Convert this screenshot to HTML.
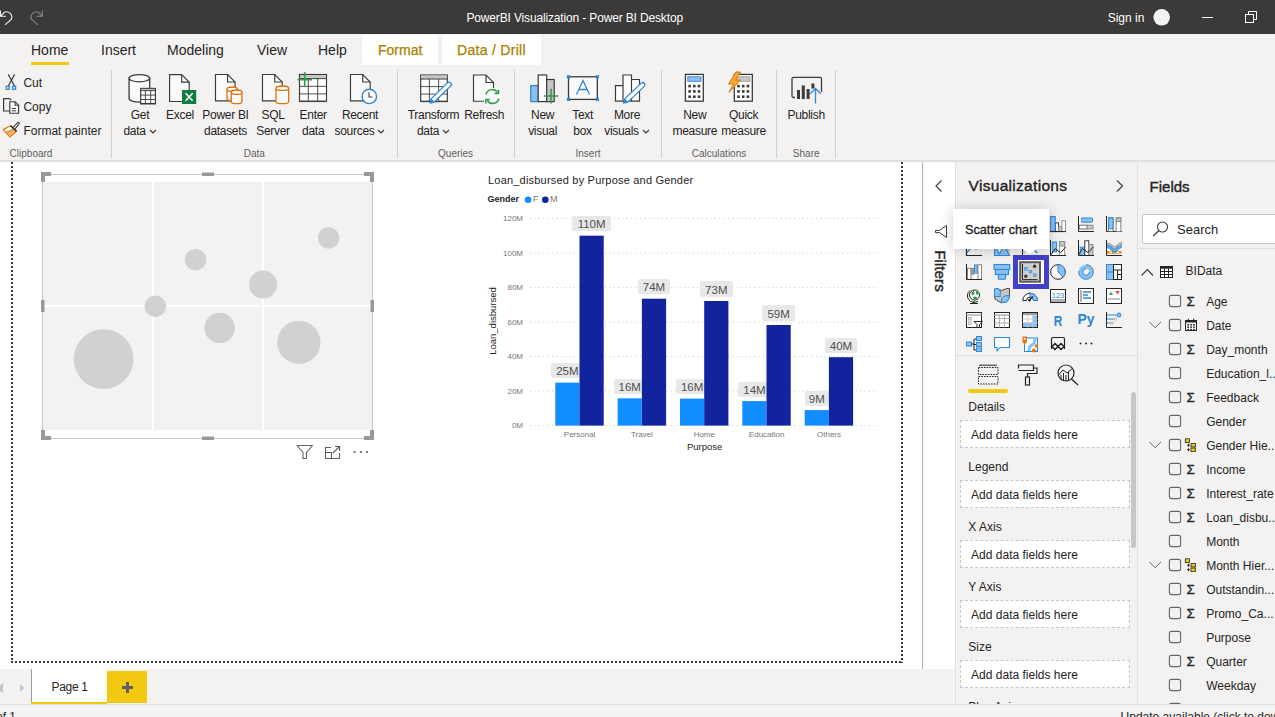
<!DOCTYPE html>
<html><head><meta charset="utf-8">
<style>
*{box-sizing:border-box;margin:0;padding:0}
html,body{width:1275px;height:717px;overflow:hidden;background:#f3f2f1;font-family:"Liberation Sans",sans-serif;color:#252423;position:relative}
.a{position:absolute}
.t{position:absolute;white-space:pre}
svg{overflow:visible}
</style></head><body>
<div class="a" style="left:0px;top:0px;width:1275px;height:34px;background:#3b3a39;"></div>
<div class="t" style="left:466.4px;top:11.84px;font-size:12px;line-height:12px;color:#ffffff;font-weight:400;letter-spacing:-0.15px;">PowerBI Visualization - Power BI Desktop</div>
<svg class="a" style="left:0px;top:0px;" width="50" height="34" viewBox="0 0 50 34"><path d="M0.8 16 L4 12.6 A5.2 5.2 0 0 1 11.2 19.5 L5 24.8" fill="none" stroke="#f3f2f1" stroke-width="1.1"/><path d="M0.5 10.5 V16.3 H6" fill="none" stroke="#f3f2f1" stroke-width="1.1"/><path d="M42 16 L38.8 12.6 A5.2 5.2 0 0 0 31.6 19.5 L37.8 24.8" fill="none" stroke="#8a8886" stroke-width="1.1"/><path d="M42.3 10.5 V16.3 H36.5" fill="none" stroke="#8a8886" stroke-width="1.1"/></svg>
<div class="t" style="left:1107.7px;top:11.54px;font-size:12px;line-height:12px;color:#ffffff;font-weight:400;">Sign in</div>
<svg class="a" style="left:1153px;top:9px;" width="18" height="18" viewBox="0 0 18 18"><circle cx="8.7" cy="8.3" r="8.3" fill="#f3f2f1"/></svg>
<div class="a" style="left:1202px;top:17px;width:11px;height:1px;background:#ffffff;"></div>
<svg class="a" style="left:1245px;top:11px;" width="13" height="12" viewBox="0 0 13 12"><rect x="0.5" y="3.5" width="8" height="8" fill="none" stroke="#fff"/><path d="M3.5 3.5 V0.5 H11.5 V8.5 H8.5" fill="none" stroke="#fff"/></svg>
<div class="a" style="left:362px;top:35px;width:76px;height:30px;background:#ffffff;"></div>
<div class="a" style="left:442px;top:35px;width:99px;height:30px;background:#ffffff;"></div>
<div class="t" style="left:31px;top:43.15px;font-size:14px;line-height:14px;color:#252423;font-weight:400;">Home</div>
<div class="t" style="left:101px;top:43.15px;font-size:14px;line-height:14px;color:#252423;font-weight:400;">Insert</div>
<div class="t" style="left:167px;top:43.15px;font-size:14px;line-height:14px;color:#252423;font-weight:400;">Modeling</div>
<div class="t" style="left:257px;top:43.15px;font-size:14px;line-height:14px;color:#252423;font-weight:400;">View</div>
<div class="t" style="left:318px;top:43.15px;font-size:14px;line-height:14px;color:#252423;font-weight:400;">Help</div>
<div class="t" style="left:378px;top:43.15px;font-size:14px;line-height:14px;color:#a88000;font-weight:400;-webkit-text-stroke:0.25px #a88000;">Format</div>
<div class="t" style="left:457px;top:43.15px;font-size:14px;line-height:14px;color:#a88000;font-weight:400;letter-spacing:0.3px;-webkit-text-stroke:0.25px #a88000;">Data / Drill</div>
<div class="a" style="left:31px;top:62px;width:38px;height:3px;background:#f2c811;"></div>
<div class="a" style="left:0px;top:160px;width:1275px;height:2px;background:#e1dfdd;"></div>
<div class="a" style="left:111px;top:70px;width:1px;height:88px;background:#d2d0ce;"></div>
<div class="a" style="left:397px;top:70px;width:1px;height:88px;background:#d2d0ce;"></div>
<div class="a" style="left:514px;top:70px;width:1px;height:88px;background:#d2d0ce;"></div>
<div class="a" style="left:661px;top:70px;width:1px;height:88px;background:#d2d0ce;"></div>
<div class="a" style="left:776px;top:70px;width:1px;height:88px;background:#d2d0ce;"></div>
<div class="a" style="left:835px;top:70px;width:1px;height:88px;background:#d2d0ce;"></div>
<div class="t" style="left:23.4px;top:76.84px;font-size:12px;line-height:12px;color:#252423;font-weight:400;">Cut</div>
<div class="t" style="left:23.4px;top:100.84px;font-size:12px;line-height:12px;color:#252423;font-weight:400;">Copy</div>
<div class="t" style="left:23.4px;top:124.84px;font-size:12px;line-height:12px;color:#252423;font-weight:400;">Format painter</div>
<div class="t" style="left:-10px;width:300px;text-align:center;top:108.84px;font-size:12px;line-height:12px;color:#252423;font-weight:400;letter-spacing:-0.3px;">Get</div>
<div class="t" style="left:-10px;width:300px;text-align:center;top:125.34px;font-size:12px;line-height:12px;color:#252423;font-weight:400;letter-spacing:-0.3px;">data<svg width="8" height="5" style="margin-left:3px;vertical-align:1px" viewBox="0 0 8 5"><path d="M1 1 L4 4 L7 1" fill="none" stroke="#3b3a39" stroke-width="1.2"/></svg></div>
<div class="t" style="left:30px;width:300px;text-align:center;top:108.84px;font-size:12px;line-height:12px;color:#252423;font-weight:400;letter-spacing:-0.3px;">Excel</div>
<div class="t" style="left:75.5px;width:300px;text-align:center;top:108.84px;font-size:12px;line-height:12px;color:#252423;font-weight:400;letter-spacing:-0.3px;">Power BI</div>
<div class="t" style="left:75.5px;width:300px;text-align:center;top:125.34px;font-size:12px;line-height:12px;color:#252423;font-weight:400;letter-spacing:-0.3px;">datasets</div>
<div class="t" style="left:123px;width:300px;text-align:center;top:108.84px;font-size:12px;line-height:12px;color:#252423;font-weight:400;letter-spacing:-0.3px;">SQL</div>
<div class="t" style="left:123px;width:300px;text-align:center;top:125.34px;font-size:12px;line-height:12px;color:#252423;font-weight:400;letter-spacing:-0.3px;">Server</div>
<div class="t" style="left:163.2px;width:300px;text-align:center;top:108.84px;font-size:12px;line-height:12px;color:#252423;font-weight:400;letter-spacing:-0.3px;">Enter</div>
<div class="t" style="left:163.2px;width:300px;text-align:center;top:125.34px;font-size:12px;line-height:12px;color:#252423;font-weight:400;letter-spacing:-0.3px;">data</div>
<div class="t" style="left:210px;width:300px;text-align:center;top:108.84px;font-size:12px;line-height:12px;color:#252423;font-weight:400;letter-spacing:-0.3px;">Recent</div>
<div class="t" style="left:210px;width:300px;text-align:center;top:125.34px;font-size:12px;line-height:12px;color:#252423;font-weight:400;letter-spacing:-0.3px;">sources<svg width="8" height="5" style="margin-left:3px;vertical-align:1px" viewBox="0 0 8 5"><path d="M1 1 L4 4 L7 1" fill="none" stroke="#3b3a39" stroke-width="1.2"/></svg></div>
<div class="t" style="left:283.5px;width:300px;text-align:center;top:108.84px;font-size:12px;line-height:12px;color:#252423;font-weight:400;letter-spacing:-0.3px;">Transform</div>
<div class="t" style="left:283.5px;width:300px;text-align:center;top:125.34px;font-size:12px;line-height:12px;color:#252423;font-weight:400;letter-spacing:-0.3px;">data<svg width="8" height="5" style="margin-left:3px;vertical-align:1px" viewBox="0 0 8 5"><path d="M1 1 L4 4 L7 1" fill="none" stroke="#3b3a39" stroke-width="1.2"/></svg></div>
<div class="t" style="left:334.2px;width:300px;text-align:center;top:108.84px;font-size:12px;line-height:12px;color:#252423;font-weight:400;letter-spacing:-0.3px;">Refresh</div>
<div class="t" style="left:392.6px;width:300px;text-align:center;top:108.84px;font-size:12px;line-height:12px;color:#252423;font-weight:400;letter-spacing:-0.3px;">New</div>
<div class="t" style="left:392.6px;width:300px;text-align:center;top:125.34px;font-size:12px;line-height:12px;color:#252423;font-weight:400;letter-spacing:-0.3px;">visual</div>
<div class="t" style="left:432.6px;width:300px;text-align:center;top:108.84px;font-size:12px;line-height:12px;color:#252423;font-weight:400;letter-spacing:-0.3px;">Text</div>
<div class="t" style="left:432.6px;width:300px;text-align:center;top:125.34px;font-size:12px;line-height:12px;color:#252423;font-weight:400;letter-spacing:-0.3px;">box</div>
<div class="t" style="left:477px;width:300px;text-align:center;top:108.84px;font-size:12px;line-height:12px;color:#252423;font-weight:400;letter-spacing:-0.3px;">More</div>
<div class="t" style="left:477px;width:300px;text-align:center;top:125.34px;font-size:12px;line-height:12px;color:#252423;font-weight:400;letter-spacing:-0.3px;">visuals<svg width="8" height="5" style="margin-left:3px;vertical-align:1px" viewBox="0 0 8 5"><path d="M1 1 L4 4 L7 1" fill="none" stroke="#3b3a39" stroke-width="1.2"/></svg></div>
<div class="t" style="left:544.8px;width:300px;text-align:center;top:108.84px;font-size:12px;line-height:12px;color:#252423;font-weight:400;letter-spacing:-0.3px;">New</div>
<div class="t" style="left:544.8px;width:300px;text-align:center;top:125.34px;font-size:12px;line-height:12px;color:#252423;font-weight:400;letter-spacing:-0.3px;">measure</div>
<div class="t" style="left:593.6px;width:300px;text-align:center;top:108.84px;font-size:12px;line-height:12px;color:#252423;font-weight:400;letter-spacing:-0.3px;">Quick</div>
<div class="t" style="left:593.6px;width:300px;text-align:center;top:125.34px;font-size:12px;line-height:12px;color:#252423;font-weight:400;letter-spacing:-0.3px;">measure</div>
<div class="t" style="left:656.2px;width:300px;text-align:center;top:108.84px;font-size:12px;line-height:12px;color:#252423;font-weight:400;letter-spacing:-0.3px;">Publish</div>
<div class="t" style="left:-119px;width:300px;text-align:center;top:149.23px;font-size:10px;line-height:10px;color:#605e5c;font-weight:400;">Clipboard</div>
<div class="t" style="left:104.30000000000001px;width:300px;text-align:center;top:149.23px;font-size:10px;line-height:10px;color:#605e5c;font-weight:400;">Data</div>
<div class="t" style="left:305.6px;width:300px;text-align:center;top:149.23px;font-size:10px;line-height:10px;color:#605e5c;font-weight:400;">Queries</div>
<div class="t" style="left:438px;width:300px;text-align:center;top:149.23px;font-size:10px;line-height:10px;color:#605e5c;font-weight:400;">Insert</div>
<div class="t" style="left:569px;width:300px;text-align:center;top:149.23px;font-size:10px;line-height:10px;color:#605e5c;font-weight:400;">Calculations</div>
<div class="t" style="left:656.2px;width:300px;text-align:center;top:149.23px;font-size:10px;line-height:10px;color:#605e5c;font-weight:400;">Share</div>
<svg class="a" style="left:0;top:0" width="1275" height="170" viewBox="0 0 1275 170"><path d="M8.3 74.4 L14.6 86.3 M14.6 74.4 L8.3 86.3" stroke="#3b3a39" stroke-width="1.2" fill="none"/><rect x="6.2" y="86.3" width="3" height="3" fill="none" stroke="#2b88d8" stroke-width="1.3"/><rect x="12.6" y="86.3" width="3" height="3" fill="none" stroke="#2b88d8" stroke-width="1.3"/><path d="M9.5 111 H3.6 V98.6 H9.5 L11 100" fill="none" stroke="#3b3a39" stroke-width="1.2"/><path d="M9.8 101.7 H15.100000000000001 L18.6 105.2 V113.2 H9.8 Z" fill="#fafafa" stroke="#3b3a39" stroke-width="1.15"/><path d="M15.100000000000001 101.7 V105.2 H18.6" fill="none" stroke="#3b3a39" stroke-width="1.15"/><path d="M11.8 108.5 H16 M11.8 110.8 H16" stroke="#3b3a39" stroke-width="1"/><path d="M3.2 129.6 L10.5 125.8 L16.3 131.3 L10 136.8 Z" fill="#fff" stroke="#d9730d" stroke-width="1.2" stroke-linejoin="round"/><path d="M5.5 132.5 L13.8 129 L16.3 131.3 L10 136.8 Z" fill="#f8b060" stroke="#d9730d" stroke-width="1" stroke-linejoin="round"/><path d="M13 127.6 L17.6 122.6 Q18.6 121.8 19.2 122.6 Q19.6 123.3 18.8 124.2 L14.8 129.2" fill="#fff" stroke="#3b3a39" stroke-width="1.1"/><path d="M10.5 125.6 L16.6 131.4" stroke="#3b3a39" stroke-width="1.5"/><path d="M129.1 78.19999999999999 V98.6 A10.3 3.6 0 0 0 149.70000000000002 98.6 V78.19999999999999" fill="#fafafa" stroke="#3b3a39" stroke-width="1.3"/><ellipse cx="139.4" cy="78.19999999999999" rx="10.3" ry="3.6" fill="#fafafa" stroke="#3b3a39" stroke-width="1.3"/><rect x="140.7" y="88.4" width="14.7" height="15.100000000000001" fill="#fff" stroke="#3b3a39" stroke-width="1.15"/><rect x="141.2" y="88.9" width="13.7" height="2.183333333333333" fill="#c8c6c4"/><path d="M140.2 95.1 H155.89999999999998" stroke="#3b3a39" stroke-width="0.9"/><path d="M140.2 99.5 H155.89999999999998" stroke="#3b3a39" stroke-width="0.9"/><path d="M140.2 104.0 H155.89999999999998" stroke="#3b3a39" stroke-width="0.9"/><path d="M140.2 90.6 H155.89999999999998" stroke="#3b3a39" stroke-width="0.9"/><path d="M145.4 90.6 V104.0" stroke="#3b3a39" stroke-width="0.9"/><path d="M150.7 90.6 V104.0" stroke="#3b3a39" stroke-width="0.9"/><path d="M169.6 74.6 H181.7 L189.2 82.1 V101.5 H169.6 Z" fill="#fafafa" stroke="#3b3a39" stroke-width="1.15"/><path d="M181.7 74.6 V82.1 H189.2" fill="none" stroke="#3b3a39" stroke-width="1.15"/><rect x="182" y="90" width="14.2" height="14" fill="#107c41"/><path d="M185.6 93.2 L192.6 100.8 M192.6 93.2 L185.6 100.8" stroke="#fff" stroke-width="1.6"/><path d="M215.5 74.5 H227.6 L235.1 82 V100.8 H215.5 Z" fill="#fafafa" stroke="#3b3a39" stroke-width="1.15"/><path d="M227.6 74.5 V82 H235.1" fill="none" stroke="#3b3a39" stroke-width="1.15"/><path d="M227.04999999999998 89.2 V98.5 A5.15 2.2 0 0 0 237.35 98.5 V89.2" fill="#fafafa" stroke="#d9730d" stroke-width="1.3"/><ellipse cx="232.2" cy="89.2" rx="5.15" ry="2.2" fill="#fafafa" stroke="#d9730d" stroke-width="1.3"/><path d="M231.25 92.2 V101.5 A5.35 2.2 0 0 0 241.95 101.5 V92.2" fill="#fafafa" stroke="#d9730d" stroke-width="1.3"/><ellipse cx="236.6" cy="92.2" rx="5.35" ry="2.2" fill="#fafafa" stroke="#d9730d" stroke-width="1.3"/><path d="M262.5 74.5 H274.7 L282.2 82 V100.8 H262.5 Z" fill="#fafafa" stroke="#3b3a39" stroke-width="1.15"/><path d="M274.7 74.5 V82 H282.2" fill="none" stroke="#3b3a39" stroke-width="1.15"/><path d="M275.95 88.2 V101.5 A6.35 2.2 0 0 0 288.65000000000003 101.5 V88.2" fill="#fafafa" stroke="#d9730d" stroke-width="1.3"/><ellipse cx="282.3" cy="88.2" rx="6.35" ry="2.2" fill="#fafafa" stroke="#d9730d" stroke-width="1.3"/><rect x="299.5" y="74.5" width="27" height="26.6" fill="#fff" stroke="#3b3a39" stroke-width="1.15"/><rect x="300" y="75" width="26" height="4.1" fill="#c8c6c4"/><path d="M299 86.3 H327" stroke="#3b3a39" stroke-width="0.9"/><path d="M299 93.9 H327" stroke="#3b3a39" stroke-width="0.9"/><path d="M299 101.6 H327" stroke="#3b3a39" stroke-width="0.9"/><path d="M299 78.6 H327" stroke="#3b3a39" stroke-width="0.9"/><path d="M308.3 78.6 V101.6" stroke="#3b3a39" stroke-width="0.9"/><path d="M317.7 78.6 V101.6" stroke="#3b3a39" stroke-width="0.9"/><path d="M297.5 79.7 H312 M304.7 72.2 V87.2" stroke="#2e9c4a" stroke-width="1.6"/><path d="M350.5 74.5 H362.7 L370.2 82 V100.8 H350.5 Z" fill="#fafafa" stroke="#3b3a39" stroke-width="1.15"/><path d="M362.7 74.5 V82 H370.2" fill="none" stroke="#3b3a39" stroke-width="1.15"/><circle cx="369.3" cy="96.4" r="7.2" fill="#fff" stroke="#2b88d8" stroke-width="1.4"/><path d="M369 92.2 V97 H372.5" fill="none" stroke="#3b3a39" stroke-width="1.1"/><rect x="420.7" y="75.0" width="26.6" height="26.2" fill="#fff" stroke="#3b3a39" stroke-width="1.15"/><rect x="421.2" y="75.5" width="25.6" height="4.033333333333333" fill="#c8c6c4"/><path d="M420.2 86.6 H447.8" stroke="#3b3a39" stroke-width="0.9"/><path d="M420.2 94.1 H447.8" stroke="#3b3a39" stroke-width="0.9"/><path d="M420.2 101.7 H447.8" stroke="#3b3a39" stroke-width="0.9"/><path d="M420.2 79.0 H447.8" stroke="#3b3a39" stroke-width="0.9"/><path d="M429.4 79.0 V101.7" stroke="#3b3a39" stroke-width="0.9"/><path d="M438.6 79.0 V101.7" stroke="#3b3a39" stroke-width="0.9"/><path d="M430 103 L434.4 101.8 L450.6 86.1 A2.25 2.25 0 0 0 447.4 82.9 L431.3 98.6 Z" fill="#fff" stroke="#2b88d8" stroke-width="1.3" stroke-linejoin="round"/><path d="M430 103 L434.4 101.8 L431.3 98.6 Z" fill="#2b88d8"/><path d="M473.5 75.0 H486 L493.5 82.5 V101.2 H473.5 Z" fill="#fafafa" stroke="#3b3a39" stroke-width="1.15"/><path d="M486 75.0 V82.5 H493.5" fill="none" stroke="#3b3a39" stroke-width="1.15"/><rect x="484" y="88" width="17" height="16" fill="#fafafa"/><path d="M486 94.5 A6.3 6.3 0 0 1 497.5 92.5 M498.8 98.5 A6.3 6.3 0 0 1 487.3 100.5" fill="none" stroke="#2e9c4a" stroke-width="1.5"/><path d="M498.5 89.5 V93.5 H494.5 M485.8 103.6 V99.6 H489.8" fill="none" stroke="#2e9c4a" stroke-width="1.5"/><rect x="530.7" y="85.6" width="7.5" height="16" fill="#8cc0ee" stroke="#2b88d8" stroke-width="1.2"/><rect x="538.2" y="75" width="8.5" height="26.6" fill="#fff" stroke="#3b3a39" stroke-width="1.2"/><rect x="546.7" y="79.5" width="7.5" height="22.1" fill="#c8c6c4" stroke="#3b3a39" stroke-width="1.2"/><rect x="544" y="89" width="14" height="14" fill="#fafafa" opacity="0"/><path d="M543.8 96 H558.3 M551 88.8 V103.5" stroke="#2e9c4a" stroke-width="1.6"/><rect x="568.5" y="76.8" width="28.8" height="22.6" fill="#fafafa" stroke="#3b3a39" stroke-width="1.3"/><rect x="566.9" y="75.2" width="3.2" height="3.2" fill="#2b88d8"/><rect x="595.6999999999999" y="75.2" width="3.2" height="3.2" fill="#2b88d8"/><rect x="566.9" y="97.80000000000001" width="3.2" height="3.2" fill="#2b88d8"/><rect x="595.6999999999999" y="97.80000000000001" width="3.2" height="3.2" fill="#2b88d8"/><path d="M576.5 94.5 L583 80.5 L589.5 94.5 M578.8 89.5 H587.2" fill="none" stroke="#2b88d8" stroke-width="1.3"/><path d="M615.5 101.2 V85.6 H623 V75 H631.5 V79.5 H639.5 V101.2 Z M623 85.6 V101.2 M631.5 79.5 V101.2" fill="#fff" stroke="#3b3a39" stroke-width="1.2"/><path d="M623.5 103 L628.0 101.9 L644.5 86.1 A2.25 2.25 0 0 0 641.5 82.9 L624.9 98.6 Z" fill="#fff" stroke="#2b88d8" stroke-width="1.3" stroke-linejoin="round"/><path d="M623.5 103 L628.0 101.9 L624.9 98.6 Z" fill="#2b88d8"/><rect x="685.4" y="74.39999999999999" width="17.900000000000002" height="26.8" fill="#fff" stroke="#3b3a39" stroke-width="1.3"/><rect x="687.8" y="76.8" width="13.100000000000001" height="4.5" fill="#8cc0ee" stroke="#2b88d8" stroke-width="0.9"/><rect x="688.3" y="84.8" width="2.6" height="2.6" fill="#3b3a39"/><rect x="693.0" y="84.8" width="2.6" height="2.6" fill="#3b3a39"/><rect x="697.7" y="84.8" width="2.6" height="2.6" fill="#3b3a39"/><rect x="688.3" y="90.1" width="2.6" height="2.6" fill="#3b3a39"/><rect x="693.0" y="90.1" width="2.6" height="2.6" fill="#3b3a39"/><rect x="697.7" y="90.1" width="2.6" height="2.6" fill="#3b3a39"/><rect x="688.3" y="95.4" width="2.6" height="2.6" fill="#3b3a39"/><rect x="693.0" y="95.4" width="2.6" height="2.6" fill="#3b3a39"/><rect x="697.7" y="95.4" width="2.6" height="2.6" fill="#3b3a39"/><rect x="734.3000000000001" y="74.39999999999999" width="18.0" height="26.8" fill="#fff" stroke="#3b3a39" stroke-width="1.3"/><rect x="736.7" y="76.8" width="13.2" height="4.5" fill="#c8c6c4" stroke="#a19f9d" stroke-width="0.9"/><rect x="737.2" y="84.8" width="2.6" height="2.6" fill="#3b3a39"/><rect x="741.9" y="84.8" width="2.6" height="2.6" fill="#3b3a39"/><rect x="746.6" y="84.8" width="2.6" height="2.6" fill="#3b3a39"/><rect x="737.2" y="90.1" width="2.6" height="2.6" fill="#3b3a39"/><rect x="741.9" y="90.1" width="2.6" height="2.6" fill="#3b3a39"/><rect x="746.6" y="90.1" width="2.6" height="2.6" fill="#3b3a39"/><rect x="737.2" y="95.4" width="2.6" height="2.6" fill="#3b3a39"/><rect x="741.9" y="95.4" width="2.6" height="2.6" fill="#3b3a39"/><rect x="746.6" y="95.4" width="2.6" height="2.6" fill="#3b3a39"/><path d="M736 72 L728.5 84 H733.5 L729 92.5 L740.5 80 H735.5 L740.5 72 Z" fill="#f7a933" stroke="#d9730d" stroke-width="1" stroke-linejoin="round"/><path d="M795 97.5 H793.5 Q792 97.5 792 96 V78.8 Q792 77.3 793.5 77.3 H820 Q821.5 77.3 821.5 78.8 V92" fill="none" stroke="#3b3a39" stroke-width="1.3"/><rect x="797" y="90" width="3" height="9" fill="#3b3a39"/><rect x="801.8" y="85.5" width="3" height="13.5" fill="#3b3a39"/><rect x="806.6" y="89" width="3" height="10" fill="#3b3a39"/><rect x="811.4" y="83.5" width="3" height="5" fill="#3b3a39"/><path d="M815.5 103.6 V88.5 M810.2 93.8 L815.5 88.5 L820.8 93.8" fill="none" stroke="#2b88d8" stroke-width="1.3"/></svg>
<div class="a" style="left:0px;top:162px;width:922px;height:507px;background:#ffffff;"></div>
<div class="a" style="left:11px;top:162px;width:2px;height:501px;background:repeating-linear-gradient(to bottom,#3b3a39 0 2px,transparent 2px 4px);"></div>
<div class="a" style="left:901px;top:162px;width:2px;height:501px;background:repeating-linear-gradient(to bottom,#3b3a39 0 2px,transparent 2px 4px);"></div>
<div class="a" style="left:11px;top:661px;width:892px;height:2px;background:repeating-linear-gradient(to right,#3b3a39 0 2px,transparent 2px 4px);"></div>
<svg class="a" style="left:0px;top:0px;left:0;top:0;" width="1275" height="717" viewBox="0 0 1275 717"><rect x="42.5" y="174.5" width="330" height="264" fill="#fff" stroke="#c8c8c8" stroke-width="1"/><rect x="43" y="182" width="329" height="248" fill="#f2f2f2"/><rect x="152" y="182" width="2" height="248" fill="#fff"/><rect x="262" y="182" width="2" height="248" fill="#fff"/><rect x="43" y="305" width="329" height="2" fill="#fff"/><circle cx="195.6" cy="259.6" r="10.7" fill="#d0d1d3"/><circle cx="328.6" cy="238" r="10.7" fill="#d0d1d3"/><circle cx="263" cy="284.6" r="14" fill="#d0d1d3"/><circle cx="155.4" cy="306.2" r="10.7" fill="#d0d1d3"/><circle cx="219.6" cy="327.9" r="15.2" fill="#d0d1d3"/><circle cx="103.6" cy="359.1" r="29.9" fill="#d0d1d3"/><circle cx="298.9" cy="342.3" r="21.6" fill="#d0d1d3"/><path d="M41 172 H51 V176 H45 V182 H41 Z" fill="#999999"/><path d="M374 172 H364 V176 H370 V182 H374 Z" fill="#999999"/><path d="M41 440 H51 V436 H45 V430 H41 Z" fill="#999999"/><path d="M374 440 H364 V436 H370 V430 H374 Z" fill="#999999"/><rect x="202" y="172.5" width="12" height="3.5" fill="#999999"/><rect x="202" y="436.5" width="12" height="3.5" fill="#999999"/><rect x="41" y="300" width="3.5" height="12" fill="#999999"/><rect x="370.5" y="300" width="3.5" height="12" fill="#999999"/><path d="M297 445.5 H312.5 L306.5 452.5 V458.5 H303 V452.5 Z" fill="none" stroke="#605e5c" stroke-width="1.1" stroke-linejoin="round"/><path d="M331 447.5 H325.5 V458.5 H339.5 V453" fill="none" stroke="#605e5c" stroke-width="1.1"/><path d="M325.5 452.5 H331.5 V458.5" fill="none" stroke="#605e5c" stroke-width="1.1"/><path d="M333 453 L339.5 446.5 M335 446.5 H339.5 V451" fill="none" stroke="#605e5c" stroke-width="1.1"/><circle cx="354.5" cy="452" r="1.1" fill="#605e5c"/><circle cx="360.8" cy="452" r="1.1" fill="#605e5c"/><circle cx="367" cy="452" r="1.1" fill="#605e5c"/><path d="M530 425.6 H878" stroke="#c8c8c8" stroke-width="1" stroke-dasharray="1 3.4"/><path d="M530 391.1 H878" stroke="#c8c8c8" stroke-width="1" stroke-dasharray="1 3.4"/><path d="M530 356.6 H878" stroke="#c8c8c8" stroke-width="1" stroke-dasharray="1 3.4"/><path d="M530 322.1 H878" stroke="#c8c8c8" stroke-width="1" stroke-dasharray="1 3.4"/><path d="M530 287.6 H878" stroke="#c8c8c8" stroke-width="1" stroke-dasharray="1 3.4"/><path d="M530 253.1 H878" stroke="#c8c8c8" stroke-width="1" stroke-dasharray="1 3.4"/><path d="M530 218.5 H878" stroke="#c8c8c8" stroke-width="1" stroke-dasharray="1 3.4"/></svg>
<div class="a" style="left:551.1px;top:363.0px;width:32.6px;height:15.2px;background:#e8e8e8;border-radius:2px;"></div>
<div class="t" style="left:417.4px;width:300px;text-align:center;top:366.37px;font-size:11.5px;line-height:11.5px;color:#505050;font-weight:400;">25M</div>
<div class="a" style="left:572.2px;top:216.1px;width:38.7px;height:15.2px;background:#e8e8e8;border-radius:2px;"></div>
<div class="t" style="left:441.5999999999999px;width:300px;text-align:center;top:219.47px;font-size:11.5px;line-height:11.5px;color:#505050;font-weight:400;">110M</div>
<div class="a" style="left:613.5px;top:378.7px;width:32.6px;height:15.2px;background:#e8e8e8;border-radius:2px;"></div>
<div class="t" style="left:479.75px;width:300px;text-align:center;top:382.07px;font-size:11.5px;line-height:11.5px;color:#505050;font-weight:400;">16M</div>
<div class="a" style="left:637.6px;top:279.1px;width:32.6px;height:15.2px;background:#e8e8e8;border-radius:2px;"></div>
<div class="t" style="left:503.94999999999993px;width:300px;text-align:center;top:282.47px;font-size:11.5px;line-height:11.5px;color:#505050;font-weight:400;">74M</div>
<div class="a" style="left:675.8px;top:379.0px;width:32.6px;height:15.2px;background:#e8e8e8;border-radius:2px;"></div>
<div class="t" style="left:542.1px;width:300px;text-align:center;top:382.37px;font-size:11.5px;line-height:11.5px;color:#505050;font-weight:400;">16M</div>
<div class="a" style="left:700.0px;top:281.4px;width:32.6px;height:15.2px;background:#e8e8e8;border-radius:2px;"></div>
<div class="t" style="left:566.3px;width:300px;text-align:center;top:284.77px;font-size:11.5px;line-height:11.5px;color:#505050;font-weight:400;">73M</div>
<div class="a" style="left:738.1px;top:381.5px;width:32.6px;height:15.2px;background:#e8e8e8;border-radius:2px;"></div>
<div class="t" style="left:604.4499999999999px;width:300px;text-align:center;top:384.87px;font-size:11.5px;line-height:11.5px;color:#505050;font-weight:400;">14M</div>
<div class="a" style="left:762.3px;top:305.4px;width:32.6px;height:15.2px;background:#e8e8e8;border-radius:2px;"></div>
<div class="t" style="left:628.6499999999999px;width:300px;text-align:center;top:308.77px;font-size:11.5px;line-height:11.5px;color:#505050;font-weight:400;">59M</div>
<div class="a" style="left:804.8px;top:390.5px;width:24px;height:15.2px;background:#e8e8e8;border-radius:2px;"></div>
<div class="t" style="left:666.8px;width:300px;text-align:center;top:393.87px;font-size:11.5px;line-height:11.5px;color:#505050;font-weight:400;">9M</div>
<div class="a" style="left:824.7px;top:337.6px;width:32.6px;height:15.2px;background:#e8e8e8;border-radius:2px;"></div>
<div class="t" style="left:690.9999999999999px;width:300px;text-align:center;top:340.97px;font-size:11.5px;line-height:11.5px;color:#505050;font-weight:400;">40M</div>
<svg class="a" style="left:0px;top:0px;left:0;top:0;" width="1275" height="717" viewBox="0 0 1275 717"><rect x="555.3" y="382.6" width="24.2" height="43.0" fill="#118dff"/><rect x="579.5" y="235.7" width="24.2" height="189.9" fill="#12239e"/><rect x="617.6" y="398.3" width="24.2" height="27.3" fill="#118dff"/><rect x="641.9" y="298.7" width="24.2" height="126.9" fill="#12239e"/><rect x="680.0" y="398.6" width="24.2" height="27.0" fill="#118dff"/><rect x="704.2" y="301.0" width="24.2" height="124.6" fill="#12239e"/><rect x="742.3" y="401.1" width="24.2" height="24.5" fill="#118dff"/><rect x="766.5" y="325.0" width="24.2" height="100.6" fill="#12239e"/><rect x="804.7" y="410.1" width="24.2" height="15.5" fill="#118dff"/><rect x="828.9" y="357.2" width="24.2" height="68.4" fill="#12239e"/></svg>
<div class="t" style="left:223px;width:300px;text-align:right;top:422.43px;font-size:8px;line-height:8px;color:#777777;font-weight:400;">0M</div>
<div class="t" style="left:223px;width:300px;text-align:right;top:387.92px;font-size:8px;line-height:8px;color:#777777;font-weight:400;">20M</div>
<div class="t" style="left:223px;width:300px;text-align:right;top:353.41px;font-size:8px;line-height:8px;color:#777777;font-weight:400;">40M</div>
<div class="t" style="left:223px;width:300px;text-align:right;top:318.90px;font-size:8px;line-height:8px;color:#777777;font-weight:400;">60M</div>
<div class="t" style="left:223px;width:300px;text-align:right;top:284.39px;font-size:8px;line-height:8px;color:#777777;font-weight:400;">80M</div>
<div class="t" style="left:223px;width:300px;text-align:right;top:249.88px;font-size:8px;line-height:8px;color:#777777;font-weight:400;">100M</div>
<div class="t" style="left:223px;width:300px;text-align:right;top:215.37px;font-size:8px;line-height:8px;color:#777777;font-weight:400;">120M</div>
<div class="t" style="left:429.6px;width:300px;text-align:center;top:431.43px;font-size:8px;line-height:8px;color:#777777;font-weight:400;">Personal</div>
<div class="t" style="left:491.95000000000005px;width:300px;text-align:center;top:431.43px;font-size:8px;line-height:8px;color:#777777;font-weight:400;">Travel</div>
<div class="t" style="left:554.3000000000001px;width:300px;text-align:center;top:431.43px;font-size:8px;line-height:8px;color:#777777;font-weight:400;">Home</div>
<div class="t" style="left:616.6500000000001px;width:300px;text-align:center;top:431.43px;font-size:8px;line-height:8px;color:#777777;font-weight:400;">Education</div>
<div class="t" style="left:679.0px;width:300px;text-align:center;top:431.43px;font-size:8px;line-height:8px;color:#777777;font-weight:400;">Others</div>
<div class="t" style="left:554.6px;width:300px;text-align:center;top:441.96px;font-size:9.5px;line-height:9.5px;color:#252423;font-weight:400;">Purpose</div>
<div class="t" style="left:488px;top:175.29px;font-size:11px;line-height:11px;color:#252423;font-weight:400;letter-spacing:0.2px;">Loan_disbursed by Purpose and Gender</div>
<div class="t" style="left:487.5px;top:195.08px;font-size:9px;line-height:9px;color:#252423;font-weight:700;">Gender</div>
<svg class="a" style="left:520px;top:195px;" width="45" height="10" viewBox="0 0 45 10"><circle cx="8.1" cy="4.7" r="3.3" fill="#118dff"/><circle cx="25.3" cy="4.7" r="3.3" fill="#12239e"/></svg>
<div class="t" style="left:533px;top:195.38px;font-size:9px;line-height:9px;color:#777777;font-weight:400;">F</div>
<div class="t" style="left:550px;top:195.38px;font-size:9px;line-height:9px;color:#777777;font-weight:400;">M</div>
<div class="t" style="left:492.8px;top:320.5px;font-size:9.5px;line-height:10px;color:#252423;transform:translate(-50%,-50%) rotate(-90deg)">Loan_disbursed</div>
<div class="a" style="left:922px;top:162px;width:1px;height:507px;background:#b3b0ad;"></div>
<div class="a" style="left:923px;top:162px;width:32px;height:507px;background:#ffffff;"></div>
<div class="a" style="left:955px;top:162px;width:182px;height:542px;background:#f3f2f1;border-left:1px solid #e1dfdd;"></div>
<div class="t" style="left:968.6px;top:178.38px;font-size:15.5px;line-height:15.5px;color:#252423;font-weight:400;letter-spacing:0.3px;-webkit-text-stroke:0.4px #252423;">Visualizations</div>
<svg class="a" style="left:0px;top:0px;left:0;top:0;" width="1275" height="717" viewBox="0 0 1275 717"><g transform="translate(1050,216)"><rect x="5.5" y="6.9" width="3" height="8.6" fill="#ffffff" stroke="#252423" stroke-width="0.9"/><rect x="8.5" y="10.6" width="3.5" height="4.9" fill="#c8c6c4" stroke="#8a8886" stroke-width="0.9"/><rect x="12" y="4.7" width="3.5" height="10.8" fill="#ffffff" stroke="#8a8886" stroke-width="0.9"/><rect x="0.6" y="0.6" width="4.6" height="14.9" fill="#8cc0ee" stroke="#2b88d8" stroke-width="1.1"/><path d="M0 15.6 H16" stroke="#252423" stroke-width="1"/></g><g transform="translate(1078,216)"><path d="M0.5 0 V15.5 H16" fill="none" stroke="#252423" stroke-width="1"/><rect x="3" y="2" width="11.5" height="4.2" rx="1" fill="#8cc0ee" stroke="#2b88d8" stroke-width="1"/><rect x="1.2" y="3" width="1.8" height="2.5" fill="#ffffff"/><rect x="1.2" y="9.2" width="8" height="3.8" fill="#ffffff" stroke="#605e5c" stroke-width="0.9"/><rect x="9.2" y="9.2" width="5.8" height="3.8" fill="#c8c6c4" stroke="#8a8886" stroke-width="0.9"/></g><g transform="translate(1106,216)"><path d="M0.5 0 V15.5 H16" fill="none" stroke="#252423" stroke-width="1"/><rect x="2.6" y="1.9" width="4.4" height="13.6" fill="#ffffff" stroke="#605e5c" stroke-width="0.9"/><rect x="2.6" y="1.9" width="4.4" height="10.8" fill="#8cc0ee" stroke="#2b88d8" stroke-width="1"/><rect x="10.2" y="1.9" width="4.6" height="13.6" fill="#ffffff" stroke="#8a8886" stroke-width="1"/><rect x="10.2" y="1.9" width="4.6" height="3.6" fill="#c8c6c4" stroke="#8a8886" stroke-width="1"/></g><g transform="translate(966,240)"><path d="M0.5 0 V15.5 H16" fill="none" stroke="#252423" stroke-width="1.2"/><path d="M1 12.5 L6 7 L10 9 L15 2" fill="none" stroke="#2b88d8" stroke-width="1.2"/></g><g transform="translate(994,240)"><rect x="12.5" y="5" width="3" height="10.5" fill="#c8c6c4"/><path d="M0.5 15.5 V5 L5.5 14 L10 5 L15.5 15.5 Z" fill="#8cc0ee" stroke="#2b88d8" stroke-width="1.1"/></g><g transform="translate(1022,240)"><path d="M0.5 0 V15.5" stroke="#252423"/><path d="M1 10 L3 13" stroke="#8cc0ee"/><path d="M11 9 L15.5 13" stroke="#2b88d8" stroke-width="1.5"/></g><g transform="translate(1050,240)"><rect x="2.3" y="2" width="4.3" height="13.5" fill="#ffffff"/><rect x="2.3" y="2" width="4.3" height="10" fill="#8cc0ee" stroke="#2b88d8" stroke-width="0.9"/><rect x="9.7" y="1.5" width="5" height="14" fill="#ffffff" stroke="#8a8886" stroke-width="0.9"/><rect x="9.7" y="1.5" width="5" height="4.5" fill="#c8c6c4" stroke="#8a8886" stroke-width="0.9"/><path d="M0.5 0 V15.5 H16" fill="none" stroke="#252423" stroke-width="1"/><path d="M0.7 15.3 L5 8.6 L10.7 12.6 L15.7 6.9" fill="none" stroke="#252423" stroke-width="1"/></g><g transform="translate(1078,240)"><rect x="2.1" y="7.1" width="4.7" height="8.4" fill="#8cc0ee" stroke="#2b88d8" stroke-width="0.9"/><rect x="6.8" y="0.8" width="4" height="14.7" fill="#ffffff" stroke="#252423" stroke-width="0.9"/><rect x="10.8" y="4.5" width="4.1" height="11" fill="#c8c6c4" stroke="#8a8886" stroke-width="0.9"/><path d="M0.5 0 V15.5 H16" fill="none" stroke="#252423" stroke-width="1"/><path d="M0.3 15.3 L4.3 8.6 L10 12.6 L15.4 6.9" fill="none" stroke="#252423" stroke-width="1"/></g><g transform="translate(1106,240)"><path d="M1 3 Q4 3 7 6 Q8.5 7.5 10 6 Q12.5 3 15.5 2.5 V6 Q12.5 6.5 10 9 Q8.5 10.5 7 9 Q4 6 1 6 Z" fill="#c8c6c4" stroke="#8a8886" stroke-width="0.8"/><rect x="1" y="11" width="14.5" height="2.6" fill="#e8891d"/><rect x="3.5" y="11.6" width="2.5" height="1.4" fill="#ffffff"/><rect x="10.5" y="11.6" width="2.5" height="1.4" fill="#ffffff"/><path d="M1 6.5 Q4 6.5 7 10 Q8.5 11.8 10 10 Q12.5 6.8 15.5 6.5" fill="none" stroke="#2b88d8" stroke-width="3"/><path d="M1 6.5 Q4 6.5 7 10 Q8.5 11.8 10 10 Q12.5 6.8 15.5 6.5" fill="none" stroke="#8cc0ee" stroke-width="1"/><path d="M0.5 0 V15.5 H16" fill="none" stroke="#252423" stroke-width="1"/></g><g transform="translate(966,264)"><rect x="1.5" y="4.3" width="3.5" height="11.2" fill="#ffffff" stroke="#8a8886" stroke-width="1"/><rect x="5" y="4.3" width="3" height="6" fill="#a19f9d" stroke="#8a8886" stroke-width="0.8"/><rect x="8.5" y="1" width="2.8" height="8.6" fill="#8cc0ee" stroke="#2b88d8" stroke-width="1"/><rect x="8.5" y="9.6" width="2.8" height="5.9" fill="#ffffff"/><rect x="12" y="0.7" width="3.5" height="14.8" fill="#ffffff" stroke="#8a8886" stroke-width="1"/><path d="M0.5 0 V15.5 H16" fill="none" stroke="#252423" stroke-width="1"/></g><g transform="translate(994,264)"><rect x="4.3" y="10.5" width="7.3" height="4.8" rx="0.8" fill="#8cc0ee" stroke="#2b88d8" stroke-width="1.1"/><rect x="1.3" y="5.5" width="13.2" height="5" fill="#8cc0ee" stroke="#2b88d8" stroke-width="1.1"/><rect x="0.1" y="0.5" width="15.7" height="5" fill="#8cc0ee" stroke="#2b88d8" stroke-width="1.1"/></g><g transform="translate(1050,264)"><circle cx="8" cy="8" r="7.3" fill="#ffffff" stroke="#252423"/><path d="M8 8 V0.7 A7.3 7.3 0 0 1 13.2 13.1 Z" fill="#8cc0ee" stroke="#2b88d8"/></g><g transform="translate(1078,264)"><circle cx="8" cy="8" r="5.3" fill="none" stroke="#8cc0ee" stroke-width="4"/><path d="M8 0.7 A7.3 7.3 0 1 1 0.8 7 M8 4.7 A3.3 3.3 0 1 0 11.3 8" fill="none" stroke="#2b88d8"/><path d="M0.8 7 A7.3 7.3 0 0 1 8 0.7" fill="none" stroke="#ffffff" stroke-width="0"/></g><g transform="translate(1106,264)"><rect x="0.5" y="0.5" width="7" height="15" fill="#8cc0ee" stroke="#2b88d8"/><path d="M0.5 8 H7.5" stroke="#2b88d8"/><rect x="7.5" y="0.5" width="8" height="15" fill="#ffffff" stroke="#252423"/><path d="M7.5 6 H15.5 M11.5 6 V15.5 M11.5 10.5 H15.5" stroke="#252423" fill="none"/></g><g transform="translate(966,288)"><path d="M4 2.5 A6.3 6.3 0 0 0 12 13" fill="none" stroke="#252423" stroke-width="1"/><circle cx="8.5" cy="7" r="5" fill="#ffffff" stroke="#252423" stroke-width="1"/><path d="M5.5 4 L8 3 L8.5 6 L6 7.5 Z M10 3 L12.5 4.5 L12 7 L10 6 Z M7 9 L10.5 8.5 L11 11 L8 11.5 Z" fill="#1e9e4a"/><path d="M4 15.5 H12 M8 13 V15.5" stroke="#252423" stroke-width="1.1"/></g><g transform="translate(994,288)"><path d="M0.5 1 L3 0.5 L5.5 1.5 L8 2.5 L10 1.5 L13 0.5 L15.5 0.5 V9 L14 12 L12 14.5 L10 14 L7.5 14.8 L4 13 L1 11 L0.5 9 Z" fill="#c8c6c4" stroke="#3b3a39" stroke-width="0.9" stroke-linejoin="round"/><path d="M0.5 1 L3 0.5 L5.5 1.5 L6.5 4 L6 7 L6.5 8.5 H0.5 Z" fill="#8cc0ee" stroke="#2b88d8" stroke-width="1"/><path d="M15.5 7.5 V9 L14 12 L12 14.5 L10 14 L7.5 14.8 L7.5 10.5 L10 8 Z" fill="#8cc0ee" stroke="#2b88d8" stroke-width="1"/></g><g transform="translate(1022,288)"><path d="M0.8 12.5 A7.3 7.3 0 0 1 15.4 12.5 H11.6 A3.5 3.5 0 0 0 4.6 12.5 Z" fill="#ffffff" stroke="#252423" stroke-width="1" stroke-linejoin="round"/><path d="M8.1 5.2 A7.3 7.3 0 0 1 15.4 12.5 H11.6 A3.5 3.5 0 0 0 8.1 9 Z" fill="#8cc0ee" stroke="#2b88d8" stroke-width="1" stroke-linejoin="round"/><path d="M7.3 12.3 L10.8 8.6" stroke="#252423" stroke-width="1.4"/><circle cx="7.3" cy="12.3" r="1.2" fill="#252423"/></g><g transform="translate(1050,288)"><rect x="0.5" y="1.5" width="15" height="13" fill="#ffffff" stroke="#252423"/><rect x="1" y="11" width="14" height="3" fill="#b3b0ad"/><text x="8" y="10" font-size="7.5" text-anchor="middle" fill="#2b88d8" font-family="Liberation Sans">123</text></g><g transform="translate(1078,288)"><rect x="0.5" y="0.5" width="15" height="15" fill="#ffffff" stroke="#252423"/><rect x="2" y="2" width="2" height="12" fill="#b3b0ad"/><path d="M5 4 H13 M5 7 H10 M5 10 H13" stroke="#2b88d8" stroke-width="1.6"/></g><g transform="translate(1106,288)"><rect x="0.5" y="0.5" width="15" height="15" fill="#ffffff" stroke="#252423"/><path d="M3 7 L5 3.5 L7 7 Z" fill="#2fb45a"/><path d="M9.5 3 H13.5 L11.5 6.5 Z" fill="#e03a3a"/><path d="M2 11 H14" stroke="#b3b0ad" stroke-width="1.5"/></g><g transform="translate(966,312)"><rect x="0.5" y="0.5" width="15" height="15" fill="#ffffff" stroke="#252423"/><path d="M0.5 3 H15.5" stroke="#b3b0ad" stroke-width="1.5"/><rect x="2.5" y="5.5" width="2.5" height="2.5" fill="none" stroke="#b3b0ad"/><rect x="2.5" y="10" width="2.5" height="2.5" fill="none" stroke="#b3b0ad"/><path d="M8 9.5 H16.5 L13.5 12.5 V15.5 H11 V12.5 Z" fill="#ffffff" stroke="#252423"/></g><g transform="translate(994,312)"><rect x="0.5" y="0.5" width="15" height="15" fill="#ffffff" stroke="#252423"/><path d="M0.5 3 H15.5" stroke="#b3b0ad" stroke-width="1.5"/><path d="M0.5 6.5 H15.5 M0.5 11 H15.5 M5.5 3 V15.5 M10.5 3 V15.5" stroke="#b3b0ad"/></g><g transform="translate(1022,312)"><rect x="0.5" y="0.5" width="15" height="15" fill="#ffffff" stroke="#252423"/><rect x="1" y="1" width="14" height="2.2" fill="#a19f9d"/><rect x="10.7" y="3.5" width="4.3" height="11.5" fill="#8cc0ee"/><rect x="1" y="10.7" width="14" height="4.3" fill="#8cc0ee"/><path d="M0.5 7 H15.5 M0.5 10.7 H15.5 M5.7 3.2 V15.5 M10.7 3.2 V15.5" stroke="#c8c6c4" stroke-width="0.8"/></g><g transform="translate(1050,312)"><text x="8" y="13.8" font-size="14" font-weight="700" text-anchor="middle" fill="#2b88d8" font-family="Liberation Sans" transform="translate(8 0) scale(0.85 1) translate(-8 0)">R</text></g><g transform="translate(1078,312)"><text x="8" y="12.3" font-size="14" font-weight="700" text-anchor="middle" fill="#2b88d8" font-family="Liberation Sans">Py</text></g><g transform="translate(1106,312)"><path d="M0.5 0 V15.5 H16" fill="none" stroke="#252423"/><path d="M1 3 H11 M1 7 H9 M1 11 H6" stroke="#2b88d8" stroke-width="1.2"/><circle cx="13" cy="3" r="2" fill="#8cc0ee" stroke="#2b88d8"/><circle cx="9.5" cy="7" r="1.3" fill="#ffffff" stroke="#b3b0ad"/><circle cx="6" cy="11" r="1.3" fill="#ffffff" stroke="#b3b0ad"/></g><g transform="translate(966,336)"><rect x="0.5" y="6" width="5" height="4" fill="#8cc0ee" stroke="#2b88d8"/><path d="M5.5 8 H8 M8 3 V14 M8 3 H10 M8 8.5 H10 M8 14 H10" stroke="#252423" fill="none"/><rect x="10.5" y="0.5" width="5" height="4" fill="#8cc0ee" stroke="#2b88d8"/><rect x="10.5" y="6.5" width="5" height="4" fill="#8cc0ee" stroke="#2b88d8"/><rect x="10.5" y="12" width="5" height="3.5" fill="#8cc0ee" stroke="#2b88d8"/></g><g transform="translate(994,336)"><path d="M0.5 1.5 H15.5 V11.5 H6 L3 15 V11.5 H0.5 Z" fill="#ffffff" stroke="#2b88d8" stroke-width="1.1" stroke-linejoin="round"/></g><g transform="translate(1022,336)"><rect x="2.5" y="2" width="13" height="13.5" fill="#ffffff" stroke="#2b88d8"/><path d="M7 15 Q7 10 10 9 Q13 8 13 2" fill="none" stroke="#8cc0ee" stroke-width="3"/><path d="M0.5 0.5 H5 V6 L2.7 8.5 L0.5 6 Z" fill="#e8730f"/><circle cx="2.7" cy="3" r="1" fill="#ffffff"/><circle cx="14.5" cy="10" r="1.7" fill="#e8730f"/><circle cx="12" cy="14.5" r="2" fill="#e8730f"/></g><g transform="translate(1050,336)"><path d="M1.5 13 V3 Q1.5 1.5 3 1.5 H13 Q14.5 1.5 14.5 3 V13" fill="none" stroke="#252423" stroke-width="1.2"/><path d="M2 10.5 L5 7.5 L8 10.5 L5 13.5 Z M8 10.5 L11 7.5 L14 10.5 L11 13.5 Z" fill="none" stroke="#252423" stroke-width="1.5"/></g><g transform="translate(1078,336)"><circle cx="2.5" cy="7.5" r="1" fill="#252423"/><circle cx="8" cy="7.5" r="1" fill="#252423"/><circle cx="13.5" cy="7.5" r="1" fill="#252423"/></g></svg>
<div class="a" style="left:1013px;top:255px;width:36px;height:34px;background:#4040c8;"></div>
<div class="a" style="left:1018px;top:260px;width:26px;height:24px;background:#fafafa;"></div>
<svg class="a" style="left:1018px;top:260px;" width="26" height="24" viewBox="0 0 26 24"><rect x="1.2" y="1.2" width="21.8" height="21.5" fill="#5a5a5a"/><rect x="3.2" y="3.2" width="17.8" height="17.5" fill="#d2d0ce"/><path d="M4.5 4 V19.6 H19.6" fill="none" stroke="#252423" stroke-width="1"/><circle cx="16.6" cy="6.3" r="1.7" fill="#3b3a39"/><circle cx="7.8" cy="16.2" r="1.7" fill="#3b3a39"/><rect x="6.6" y="7.4" width="2.8" height="2.8" fill="#6cb8f6" stroke="#2b88d8" stroke-width="0.5"/><rect x="11.1" y="10.2" width="2.8" height="2.8" fill="#6cb8f6" stroke="#2b88d8" stroke-width="0.5"/><rect x="15.299999999999999" y="13.799999999999999" width="2.8" height="2.8" fill="#6cb8f6" stroke="#2b88d8" stroke-width="0.5"/></svg>
<div class="a" style="left:953px;top:209px;width:96px;height:40px;background:#ffffff;box-shadow:0 1px 14px rgba(0,0,0,0.2);"></div>
<svg class="a" style="left:1022px;top:248px;" width="16" height="7" viewBox="0 0 16 7"><path d="M0 0 L8 6 L16 0 Z" fill="#fff"/></svg>
<div class="t" style="left:965px;top:224.05px;font-size:12.7px;line-height:12.7px;color:#252423;font-weight:400;-webkit-text-stroke:0.35px #252423;">Scatter chart</div>
<svg class="a" style="left:934px;top:179px;" width="10" height="14" viewBox="0 0 10 14"><path d="M7.5 1.5 L2 7 L7.5 12.5" fill="none" stroke="#3b3a39" stroke-width="1.1"/></svg>
<svg class="a" style="left:1115px;top:179px;" width="10" height="14" viewBox="0 0 10 14"><path d="M2 1.5 L7.5 7 L2 12.5" fill="none" stroke="#3b3a39" stroke-width="1.1"/></svg>
<svg class="a" style="left:934px;top:224px;" width="14" height="15" viewBox="0 0 14 15"><path d="M12.5 1.5 V13.5 L5.5 8.6 H1.5 V6.4 H5.5 Z" fill="none" stroke="#3b3a39" stroke-width="1" stroke-linejoin="round"/></svg>
<div class="t" style="left:939.5px;top:271px;font-size:15.3px;line-height:15px;font-weight:400;-webkit-text-stroke:0.4px #252423;color:#252423;transform:translate(-50%,-50%) rotate(90deg)">Filters</div>
<div class="a" style="left:956px;top:355px;width:181px;height:1px;background:#e1dfdd;"></div>
<svg class="a" style="left:0px;top:0px;left:0;top:0;" width="1275" height="717" viewBox="0 0 1275 717"><path d="M979 365.2 H997" stroke="#252423" stroke-width="1"/><rect x="978.5" y="367.5" width="19.5" height="7" fill="none" stroke="#252423" stroke-dasharray="1.6 1.1" stroke-width="1"/><rect x="978.5" y="376.5" width="19.5" height="7.5" fill="none" stroke="#252423" stroke-dasharray="1.6 1.1" stroke-width="1"/><path d="M1018.5 368.5 V365 H1033.5 V370.5 H1018.5 M1033.5 368 H1037 V373.5 H1027.5 V377" fill="none" stroke="#252423" stroke-width="1.2"/><rect x="1025.5" y="377" width="4" height="8" fill="none" stroke="#252423" stroke-width="1.2"/><circle cx="1066" cy="373" r="8" fill="none" stroke="#252423" stroke-width="1.2"/><path d="M1058.5 375 L1063 370 L1067 373 L1073 368" fill="none" stroke="#252423" stroke-width="1"/><path d="M1061 375 V380 M1063.5 373 V381 M1066 375 V381 M1068.5 372 V380" stroke="#252423" stroke-width="1"/><path d="M1071.5 379 L1078 385" stroke="#252423" stroke-width="1.3"/></svg>
<div class="a" style="left:968px;top:389px;width:40px;height:3.5px;background:#f2c811;border-radius:2px;"></div>
<div class="a" style="left:1130.5px;top:392px;width:5px;height:156px;background:#c8c6c4;border-radius:3px;"></div>
<div class="t" style="left:968.3px;top:400.84px;font-size:12px;line-height:12px;color:#252423;font-weight:400;">Details</div>
<div class="a" style="left:960px;top:420px;width:170px;height:27.5px;background:#ffffff;border:1px dashed #c8c6c4;"></div>
<div class="t" style="left:971.1px;top:428.84px;font-size:12px;line-height:12px;color:#252423;font-weight:400;">Add data fields here</div>
<div class="t" style="left:968.3px;top:460.84px;font-size:12px;line-height:12px;color:#252423;font-weight:400;">Legend</div>
<div class="a" style="left:960px;top:480px;width:170px;height:27.5px;background:#ffffff;border:1px dashed #c8c6c4;"></div>
<div class="t" style="left:971.1px;top:488.84px;font-size:12px;line-height:12px;color:#252423;font-weight:400;">Add data fields here</div>
<div class="t" style="left:968.3px;top:520.84px;font-size:12px;line-height:12px;color:#252423;font-weight:400;">X Axis</div>
<div class="a" style="left:960px;top:540px;width:170px;height:27.5px;background:#ffffff;border:1px dashed #c8c6c4;"></div>
<div class="t" style="left:971.1px;top:548.84px;font-size:12px;line-height:12px;color:#252423;font-weight:400;">Add data fields here</div>
<div class="t" style="left:968.3px;top:580.84px;font-size:12px;line-height:12px;color:#252423;font-weight:400;">Y Axis</div>
<div class="a" style="left:960px;top:600px;width:170px;height:27.5px;background:#ffffff;border:1px dashed #c8c6c4;"></div>
<div class="t" style="left:971.1px;top:608.84px;font-size:12px;line-height:12px;color:#252423;font-weight:400;">Add data fields here</div>
<div class="t" style="left:968.3px;top:640.84px;font-size:12px;line-height:12px;color:#252423;font-weight:400;">Size</div>
<div class="a" style="left:960px;top:660px;width:170px;height:27.5px;background:#ffffff;border:1px dashed #c8c6c4;"></div>
<div class="t" style="left:971.1px;top:668.84px;font-size:12px;line-height:12px;color:#252423;font-weight:400;">Add data fields here</div>
<div class="t" style="left:968.3px;top:700.84px;font-size:12px;line-height:12px;color:#252423;font-weight:400;">Play Axis</div>
<div class="a" style="left:1137px;top:162px;width:138px;height:542px;background:#f3f2f1;border-left:1px solid #e1dfdd;"></div>
<div class="t" style="left:1149.6px;top:179.00px;font-size:15px;line-height:15px;color:#252423;font-weight:400;-webkit-text-stroke:0.4px #252423;">Fields</div>
<div class="a" style="left:1141.5px;top:214px;width:140px;height:29.5px;background:#ffffff;border:1px solid #c8c6c4;border-radius:2px;"></div>
<svg class="a" style="left:1152px;top:221px;" width="17" height="16" viewBox="0 0 17 16"><circle cx="10.5" cy="6" r="5" fill="none" stroke="#3b3a39" stroke-width="1.1"/><path d="M7 9.5 L1.2 15" stroke="#3b3a39" stroke-width="1.2"/></svg>
<div class="t" style="left:1177px;top:223.20px;font-size:13px;line-height:13px;color:#252423;font-weight:400;">Search</div>
<div class="a" style="left:1138px;top:247.5px;width:137px;height:1px;background:#e1dfdd;"></div>
<svg class="a" style="left:0px;top:0px;left:0;top:0;" width="1275" height="717" viewBox="0 0 1275 717"><path d="M1141.5 275.5 L1147.3 269.5 L1153 275.5" fill="none" stroke="#3b3a39" stroke-width="1.1"/><rect x="1160.5" y="266.5" width="12" height="11" fill="#fff" stroke="#252423"/><rect x="1160.5" y="266.5" width="12" height="2.2" fill="#252423"/><path d="M1160.5 271.5 H1172.5 M1160.5 274.5 H1172.5 M1164.5 268.5 V277.5 M1168.5 268.5 V277.5" stroke="#252423" stroke-width="1"/><rect x="1169.4" y="295.4" width="11.2" height="11.2" rx="2" fill="none" stroke="#666" stroke-width="1.1"/><text x="1190.6" y="305.9" font-size="13.5" font-weight="400" text-anchor="middle" fill="#252423" stroke="#252423" stroke-width="0.35" font-family="Liberation Sans">&#931;</text><rect x="1169.4" y="319.4" width="11.2" height="11.2" rx="2" fill="none" stroke="#666" stroke-width="1.1"/><path d="M1149.5 322.0 L1155.2 327.7 L1161 322.0" fill="none" stroke="#605e5c" stroke-width="1"/><rect x="1185.5" y="320.5" width="11" height="10" fill="#fff" stroke="#252423" stroke-width="1"/><rect x="1185.5" y="320.5" width="11" height="2" fill="#252423"/><path d="M1188.3 318.7 V321.5 M1193.7 318.7 V321.5" stroke="#252423" stroke-width="1"/><rect x="1187.3" y="324.0" width="1.7" height="1.5" fill="#252423"/><rect x="1190.2" y="324.0" width="1.7" height="1.5" fill="#252423"/><rect x="1193.1" y="324.0" width="1.7" height="1.5" fill="#252423"/><rect x="1187.3" y="326.4" width="1.7" height="1.5" fill="#252423"/><rect x="1190.2" y="326.4" width="1.7" height="1.5" fill="#252423"/><rect x="1193.1" y="326.4" width="1.7" height="1.5" fill="#252423"/><rect x="1187.3" y="328.8" width="1.7" height="1.5" fill="#252423"/><rect x="1190.2" y="328.8" width="1.7" height="1.5" fill="#252423"/><rect x="1193.1" y="328.8" width="1.7" height="1.5" fill="#252423"/><rect x="1169.4" y="343.4" width="11.2" height="11.2" rx="2" fill="none" stroke="#666" stroke-width="1.1"/><text x="1190.6" y="353.9" font-size="13.5" font-weight="400" text-anchor="middle" fill="#252423" stroke="#252423" stroke-width="0.35" font-family="Liberation Sans">&#931;</text><rect x="1169.4" y="367.4" width="11.2" height="11.2" rx="2" fill="none" stroke="#666" stroke-width="1.1"/><rect x="1169.4" y="391.4" width="11.2" height="11.2" rx="2" fill="none" stroke="#666" stroke-width="1.1"/><text x="1190.6" y="401.9" font-size="13.5" font-weight="400" text-anchor="middle" fill="#252423" stroke="#252423" stroke-width="0.35" font-family="Liberation Sans">&#931;</text><rect x="1169.4" y="415.4" width="11.2" height="11.2" rx="2" fill="none" stroke="#666" stroke-width="1.1"/><rect x="1169.4" y="439.4" width="11.2" height="11.2" rx="2" fill="none" stroke="#666" stroke-width="1.1"/><path d="M1149.5 442.0 L1155.2 447.7 L1161 442.0" fill="none" stroke="#605e5c" stroke-width="1"/><rect x="1185.3" y="438.8" width="4.2" height="3.6" fill="#f2c811" stroke="#252423" stroke-width="0.8"/><rect x="1191" y="443.5" width="4.6" height="3.4" fill="#f2c811" stroke="#252423" stroke-width="0.8"/><rect x="1191" y="448.0" width="4.6" height="3.4" fill="#f2c811" stroke="#252423" stroke-width="0.8"/><path d="M1187 445.2 H1190 M1188.5 443.7 V446.7 M1187 449.7 H1190 M1188.5 448.2 V451.2" stroke="#252423" stroke-width="0.9"/><rect x="1169.4" y="463.4" width="11.2" height="11.2" rx="2" fill="none" stroke="#666" stroke-width="1.1"/><text x="1190.6" y="473.9" font-size="13.5" font-weight="400" text-anchor="middle" fill="#252423" stroke="#252423" stroke-width="0.35" font-family="Liberation Sans">&#931;</text><rect x="1169.4" y="487.4" width="11.2" height="11.2" rx="2" fill="none" stroke="#666" stroke-width="1.1"/><text x="1190.6" y="497.9" font-size="13.5" font-weight="400" text-anchor="middle" fill="#252423" stroke="#252423" stroke-width="0.35" font-family="Liberation Sans">&#931;</text><rect x="1169.4" y="511.4" width="11.2" height="11.2" rx="2" fill="none" stroke="#666" stroke-width="1.1"/><text x="1190.6" y="521.9" font-size="13.5" font-weight="400" text-anchor="middle" fill="#252423" stroke="#252423" stroke-width="0.35" font-family="Liberation Sans">&#931;</text><rect x="1169.4" y="535.4" width="11.2" height="11.2" rx="2" fill="none" stroke="#666" stroke-width="1.1"/><rect x="1169.4" y="559.4" width="11.2" height="11.2" rx="2" fill="none" stroke="#666" stroke-width="1.1"/><path d="M1149.5 562.0 L1155.2 567.7 L1161 562.0" fill="none" stroke="#605e5c" stroke-width="1"/><rect x="1185.3" y="558.8" width="4.2" height="3.6" fill="#f2c811" stroke="#252423" stroke-width="0.8"/><rect x="1191" y="563.5" width="4.6" height="3.4" fill="#f2c811" stroke="#252423" stroke-width="0.8"/><rect x="1191" y="568.0" width="4.6" height="3.4" fill="#f2c811" stroke="#252423" stroke-width="0.8"/><path d="M1187 565.2 H1190 M1188.5 563.7 V566.7 M1187 569.7 H1190 M1188.5 568.2 V571.2" stroke="#252423" stroke-width="0.9"/><rect x="1169.4" y="583.4" width="11.2" height="11.2" rx="2" fill="none" stroke="#666" stroke-width="1.1"/><text x="1190.6" y="593.9" font-size="13.5" font-weight="400" text-anchor="middle" fill="#252423" stroke="#252423" stroke-width="0.35" font-family="Liberation Sans">&#931;</text><rect x="1169.4" y="607.4" width="11.2" height="11.2" rx="2" fill="none" stroke="#666" stroke-width="1.1"/><text x="1190.6" y="617.9" font-size="13.5" font-weight="400" text-anchor="middle" fill="#252423" stroke="#252423" stroke-width="0.35" font-family="Liberation Sans">&#931;</text><rect x="1169.4" y="631.4" width="11.2" height="11.2" rx="2" fill="none" stroke="#666" stroke-width="1.1"/><rect x="1169.4" y="655.4" width="11.2" height="11.2" rx="2" fill="none" stroke="#666" stroke-width="1.1"/><text x="1190.6" y="665.9" font-size="13.5" font-weight="400" text-anchor="middle" fill="#252423" stroke="#252423" stroke-width="0.35" font-family="Liberation Sans">&#931;</text><rect x="1169.4" y="679.4" width="11.2" height="11.2" rx="2" fill="none" stroke="#666" stroke-width="1.1"/><rect x="1169.4" y="703.4" width="11.2" height="11.2" rx="2" fill="none" stroke="#666" stroke-width="1.1"/></svg>
<div class="t" style="left:1185.6px;top:264.74px;font-size:12px;line-height:12px;color:#252423;font-weight:400;">BIData</div>
<div class="t" style="left:1206.2px;top:295.69px;font-size:12px;line-height:12px;color:#252423;font-weight:400;">Age</div>
<div class="t" style="left:1206.2px;top:319.69px;font-size:12px;line-height:12px;color:#252423;font-weight:400;">Date</div>
<div class="t" style="left:1206.2px;top:343.69px;font-size:12px;line-height:12px;color:#252423;font-weight:400;">Day_month</div>
<div class="t" style="left:1206.2px;top:367.69px;font-size:12px;line-height:12px;color:#252423;font-weight:400;">Education_l...</div>
<div class="t" style="left:1206.2px;top:391.69px;font-size:12px;line-height:12px;color:#252423;font-weight:400;">Feedback</div>
<div class="t" style="left:1206.2px;top:415.69px;font-size:12px;line-height:12px;color:#252423;font-weight:400;">Gender</div>
<div class="t" style="left:1206.2px;top:439.69px;font-size:12px;line-height:12px;color:#252423;font-weight:400;">Gender Hie...</div>
<div class="t" style="left:1206.2px;top:463.69px;font-size:12px;line-height:12px;color:#252423;font-weight:400;">Income</div>
<div class="t" style="left:1206.2px;top:487.69px;font-size:12px;line-height:12px;color:#252423;font-weight:400;">Interest_rate</div>
<div class="t" style="left:1206.2px;top:511.69px;font-size:12px;line-height:12px;color:#252423;font-weight:400;">Loan_disbu...</div>
<div class="t" style="left:1206.2px;top:535.69px;font-size:12px;line-height:12px;color:#252423;font-weight:400;">Month</div>
<div class="t" style="left:1206.2px;top:559.69px;font-size:12px;line-height:12px;color:#252423;font-weight:400;">Month Hier...</div>
<div class="t" style="left:1206.2px;top:583.69px;font-size:12px;line-height:12px;color:#252423;font-weight:400;">Outstandin...</div>
<div class="t" style="left:1206.2px;top:607.69px;font-size:12px;line-height:12px;color:#252423;font-weight:400;">Promo_Ca...</div>
<div class="t" style="left:1206.2px;top:631.69px;font-size:12px;line-height:12px;color:#252423;font-weight:400;">Purpose</div>
<div class="t" style="left:1206.2px;top:655.69px;font-size:12px;line-height:12px;color:#252423;font-weight:400;">Quarter</div>
<div class="t" style="left:1206.2px;top:679.69px;font-size:12px;line-height:12px;color:#252423;font-weight:400;">Weekday</div>
<div class="t" style="left:1206.2px;top:703.69px;font-size:12px;line-height:12px;color:#252423;font-weight:400;">Year</div>
<div class="a" style="left:31px;top:669px;width:76px;height:35px;background:#ffffff;border-left:1px solid #a19f9d;"></div>
<div class="a" style="left:31px;top:702px;width:76px;height:2px;background:#f2c811;"></div>
<div class="a" style="left:107px;top:671px;width:40px;height:32px;background:#f2c811;"></div>
<svg class="a" style="left:120px;top:680px;" width="15" height="15" viewBox="0 0 15 15"><path d="M7.5 2 V13 M2 7.5 H13" stroke="#605e5c" stroke-width="3"/></svg>
<svg class="a" style="left:0px;top:680px;" width="25" height="16" viewBox="0 0 25 16"><path d="M3 2.5 L-2 8 L3 13.5 Z" fill="#c8c6c4"/><path d="M20 4 L24.5 8 L20 12 Z" fill="#c8c6c4"/></svg>
<div class="t" style="left:-80.4px;width:300px;text-align:center;top:680.64px;font-size:12px;line-height:12px;color:#252423;font-weight:400;letter-spacing:-0.3px;">Page 1</div>
<div class="a" style="left:0px;top:704px;width:1275px;height:13px;background:#f3f2f1;border-top:1px solid #e1dfdd;"></div>
<div class="t" style="left:-45.4px;top:710.84px;font-size:12px;line-height:12px;color:#252423;font-weight:400;">Page 1 of 1</div>
<div class="t" style="left:1120.6px;top:710.84px;font-size:12px;line-height:12px;color:#252423;font-weight:400;">Update available (click to download)</div>
</body></html>
